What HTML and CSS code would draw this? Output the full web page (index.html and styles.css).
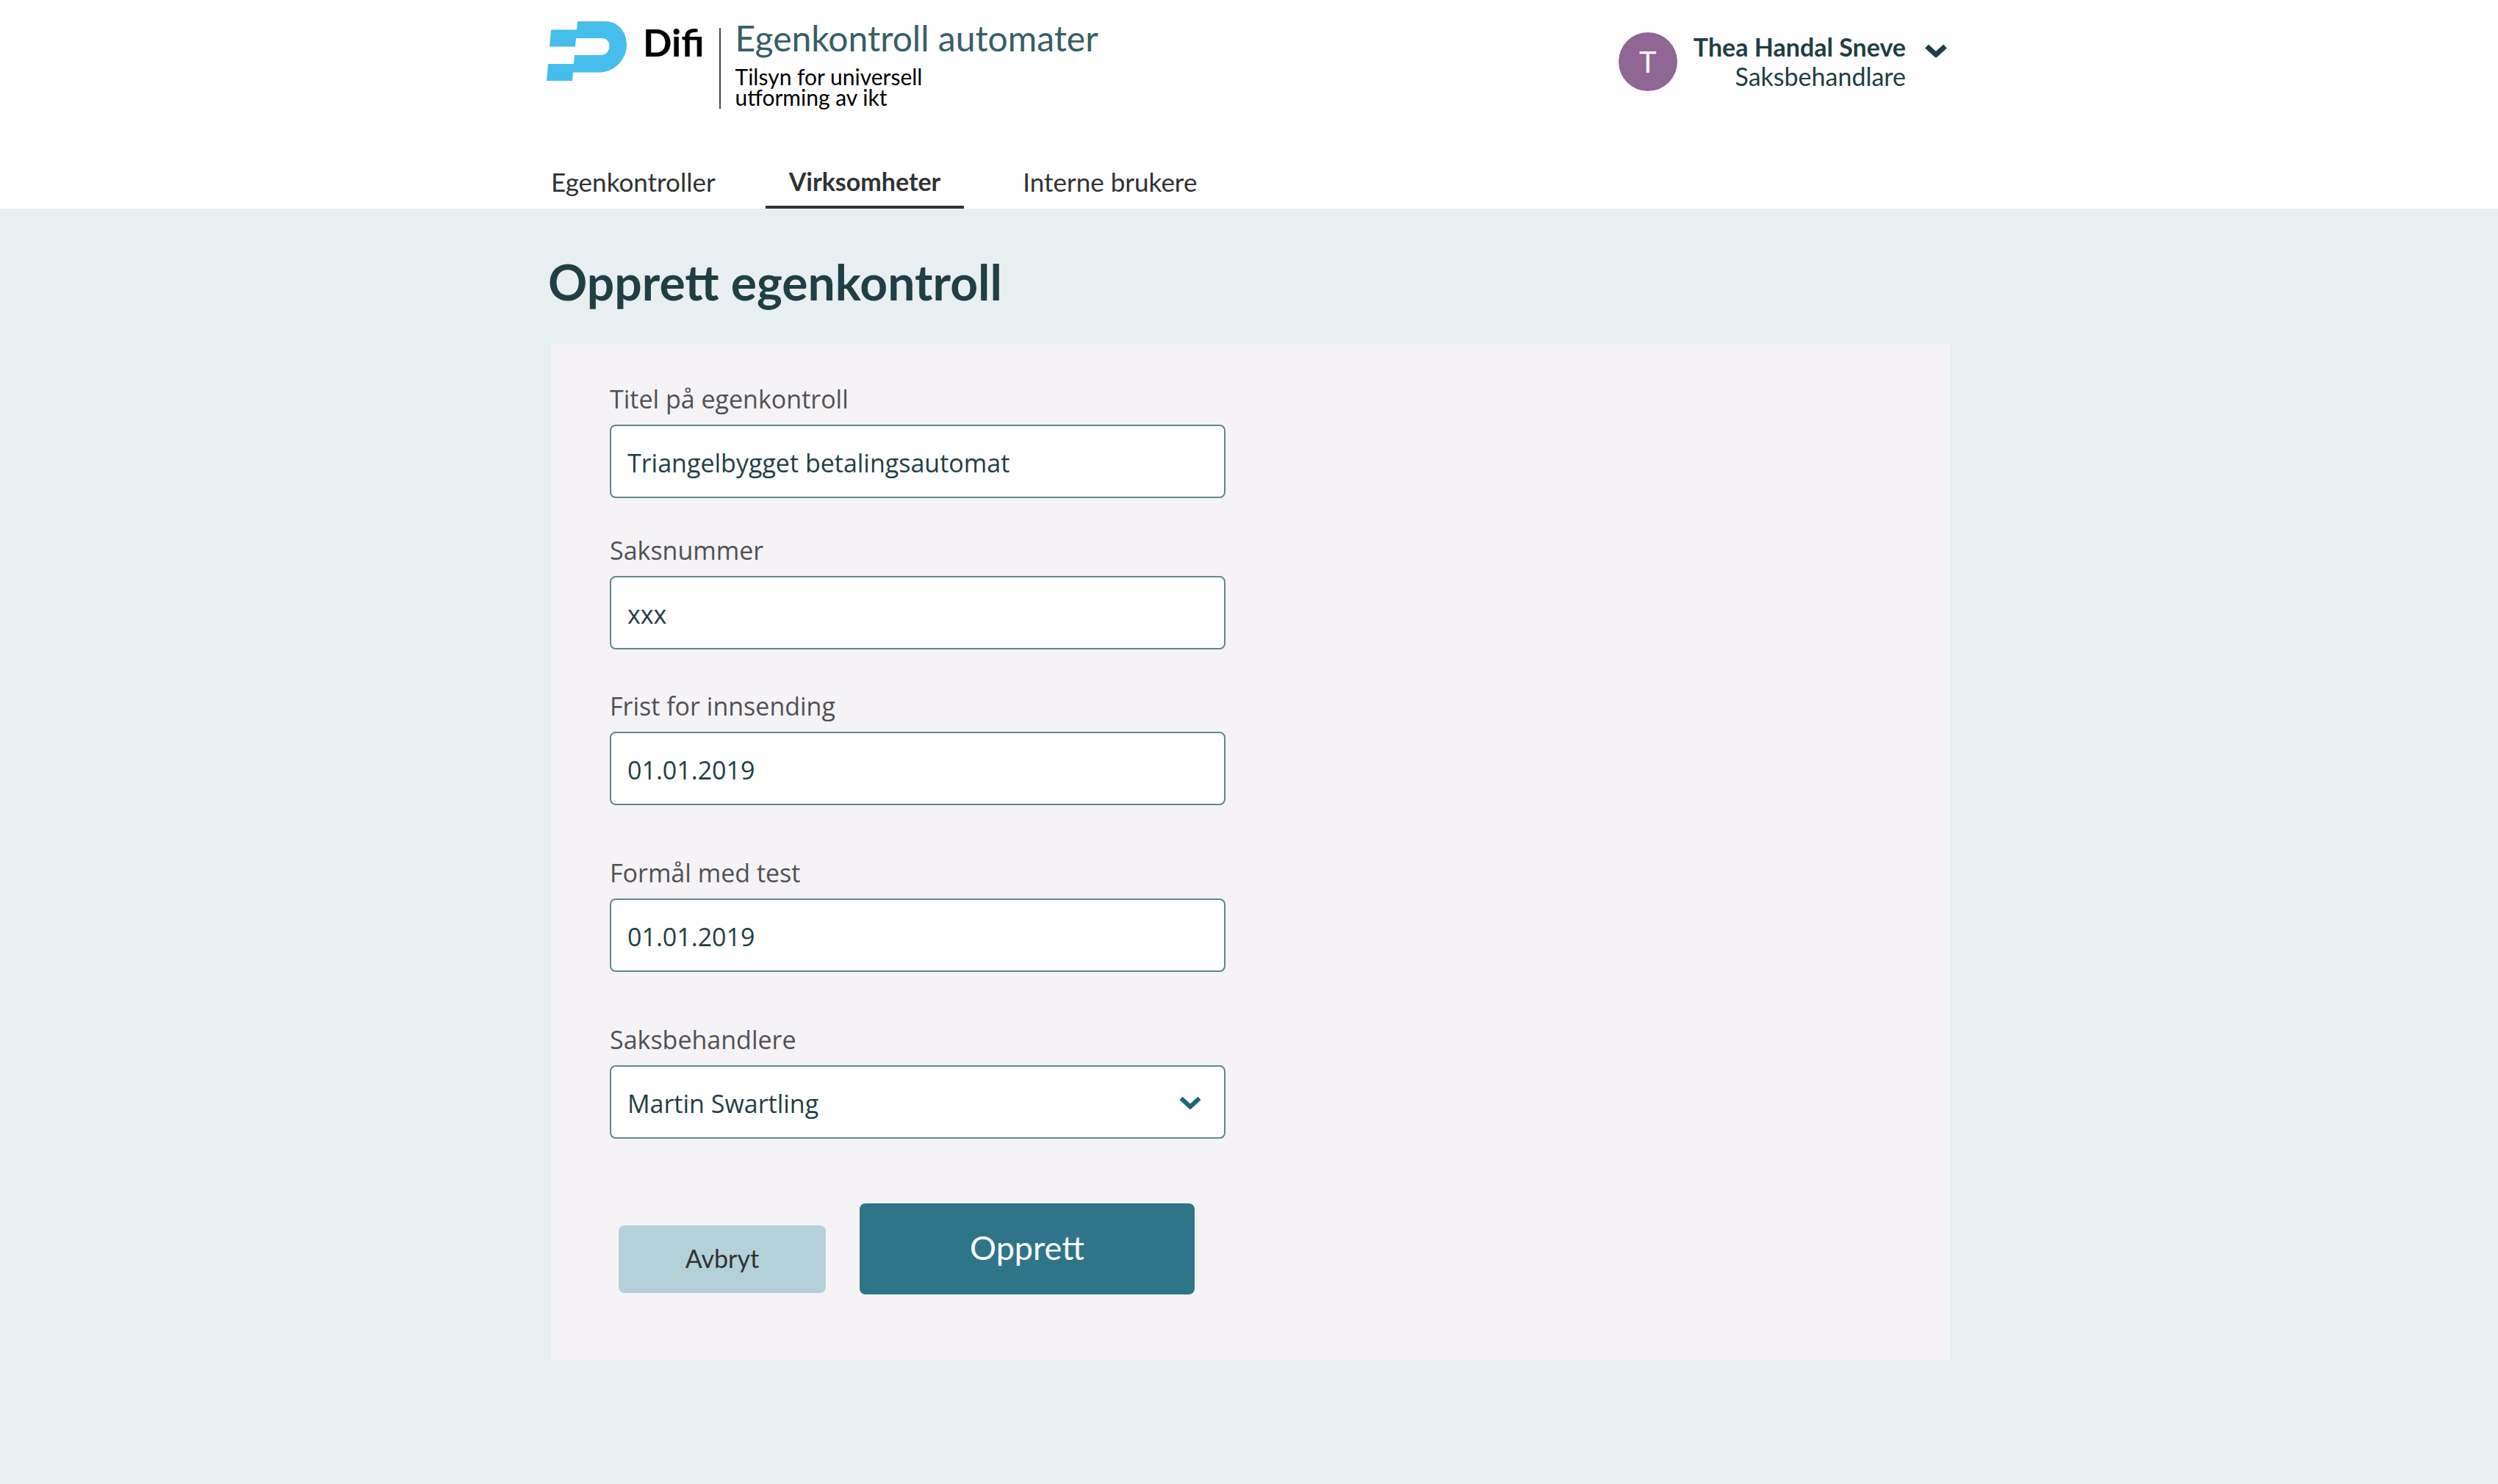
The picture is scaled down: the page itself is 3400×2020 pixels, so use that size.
FILE: index.html
```html
<!DOCTYPE html>
<html lang="nb">
<head>
  <meta charset="utf-8">
  <meta name="viewport" content="width=device-width, initial-scale=1">
  <title>Opprett egenkontroll</title>
  <link rel="stylesheet" href="styles.css">
</head>
<body>
  <header class="header">
    <div class="container">
      <div class="topbar">
        <a class="brand" href="#">
          <svg class="brand-mark" viewBox="0 0 109 81" aria-hidden="true">
            <path d="M42 0H80C97 0 109 14 109 32C109 52 92 69.500 72 69.500H36L35 81H0L2 58H37L38 46H74C81 46 85.500 40 85.500 33.500C85.500 27 81 23 75 23H40L39 34.500H4L6 11.500H41Z"/>
          </svg>
          <span class="brand-name">Difi</span>
          <span class="brand-text">
            <span class="brand-product">Egenkontroll automater</span>
            <span class="brand-tagline">Tilsyn for universell<br>utforming av ikt</span>
          </span>
        </a>
        <button class="user" type="button">
          <span class="avatar">T</span>
          <span class="user-text">
            <span class="user-name">Thea Handal Sneve</span>
            <span class="user-role">Saksbehandlare</span>
          </span>
          <svg class="chevron" viewBox="0 0 30 18" aria-hidden="true"><path d="M2.500 3L15 14.500L27.500 3"/></svg>
        </button>
      </div>
      <nav class="nav">
        <a class="nav-link" href="#">Egenkontroller</a>
        <a class="nav-link nav-link--active" href="#" aria-current="page">Virksomheter</a>
        <a class="nav-link" href="#">Interne brukere</a>
      </nav>
    </div>
  </header>
  <main class="container">
    <h1 class="title">Opprett egenkontroll</h1>
    <form class="card">
      <div class="field">
        <label class="label" for="title">Titel på egenkontroll</label>
        <input class="input" id="title" type="text" value="Triangelbygget betalingsautomat">
      </div>
      <div class="field field--close">
        <label class="label" for="case">Saksnummer</label>
        <input class="input" id="case" type="text" value="xxx">
      </div>
      <div class="field field--medium">
        <label class="label" for="deadline">Frist for innsending</label>
        <input class="input" id="deadline" type="text" value="01.01.2019">
      </div>
      <div class="field field--far">
        <label class="label" for="purpose">Formål med test</label>
        <input class="input" id="purpose" type="text" value="01.01.2019">
      </div>
      <div class="field field--far">
        <label class="label" for="handler">Saksbehandlere</label>
        <div class="select">
          <select class="input" id="handler"><option>Martin Swartling</option></select>
          <svg class="chevron chevron--select" viewBox="0 0 30 18" aria-hidden="true"><path d="M2.500 3L15 14.500L27.500 3"/></svg>
        </div>
      </div>
      <div class="actions">
        <button class="button button--secondary" type="button">Avbryt</button>
        <button class="button button--primary" type="submit">Opprett</button>
      </div>
    </form>
  </main>
</body>
</html>
```
FILE: styles.css
```css
* { box-sizing: border-box; }

body {
  margin: 0;
  background: #e7eff0;
  color: #1f3f43;
  font-family: Lato, "Liberation Sans", sans-serif;
}

a { color: inherit; text-decoration: none; }

.container {
  max-width: 1916px;
  margin: 0 auto;
  padding: 0 4px 0 8px;
}

.header { background: #fff; }

.topbar {
  display: flex;
  justify-content: space-between;
  align-items: flex-start;
}

.brand {
  display: flex;
  align-items: flex-start;
  margin-left: -6px;
  padding-top: 29px;
}

.brand-mark { width: 109px; height: 81px; fill: #46beeb; }

.brand-name {
  margin-left: 22px;
  color: #000;
  font-size: 52px;
  font-weight: 700;
  line-height: 56px;
}

.brand-text {
  display: flex;
  flex-direction: column;
  margin: 9px 0 0 20px;
  padding: 0 0 2px 20px;
  border-left: 2px solid #474747;
}

.brand-product { color: #365f65; font-size: 48px; line-height: 48px; margin-top: -10px; }

.brand-tagline { margin-top: 14px; color: #000; font-size: 30px; line-height: 28px; }

.user {
  display: flex;
  align-items: flex-start;
  margin: 44px 4px 0 0;
  padding: 0;
  border: 0;
  background: none;
  color: inherit;
  font: inherit;
}

.avatar {
  width: 80px;
  height: 80px;
  border-radius: 50%;
  background: #8f6694;
  color: #fff;
  font-size: 40px;
  line-height: 80px;
}

.user-text {
  display: flex;
  flex-direction: column;
  margin-left: 22px;
  font-size: 34px;
  line-height: 40px;
  text-align: right;
}

.user-name { font-weight: 700; }

.chevron {
  width: 30px;
  height: 18px;
  margin: 16px 0 0 26px;
  fill: none;
  stroke: #1f3f43;
  stroke-width: 7;
}

.nav { display: flex; gap: 60px; margin: 74px 0 0 -8px; }

.nav-link {
  padding: 0 8px 8px;
  border-bottom: 4px solid transparent;
  color: #303233;
  font-size: 35px;
  line-height: 50px;
}

.nav-link--active {
  margin-right: 12px;
  padding: 0 32px 8px;
  border-color: #2d3434;
  font-size: 34px;
  font-weight: 700;
}

.title { margin: 60px 0 0 -4px; font-size: 66px; font-weight: 700; line-height: 80px; }

.card {
  margin-top: 44px;
  padding: 51px 80px 90px;
  background: #f5f3f6;
  font-family: "Open Sans", "Noto Sans", sans-serif;
}

.field { display: flex; flex-direction: column; gap: 11px; max-width: 838px; }
.field--close { margin-top: 47px; }
.field--medium { margin-top: 53px; }
.field--far { margin-top: 68px; }

.label { color: #505153; font-size: 34px; line-height: 48px; }

.input {
  width: 100%;
  height: 100px;
  padding: 4px 22px 0;
  border: 2px solid #628789;
  border-radius: 8px;
  background: #fff;
  color: #1f3f43;
  font-family: inherit;
  font-size: 34px;
  appearance: none;
}

.select { position: relative; }

.chevron--select {
  position: absolute;
  top: 42px;
  right: 33px;
  margin: 0;
  stroke: #1b667c;
  stroke-width: 6;
  pointer-events: none;
}

.actions { display: flex; align-items: flex-end; gap: 46px; margin: 88px 0 0 12px; }

.button {
  padding: 0 0 4px;
  border: 0;
  border-radius: 8px;
  font-family: Lato, "Liberation Sans", sans-serif;
}

.button--secondary {
  width: 282px;
  height: 92px;
  margin-bottom: 2px;
  background: #b4d1d9;
  color: #303233;
  font-size: 34px;
}

.button--primary {
  width: 456px;
  height: 124px;
  background: #2e758a;
  color: #fff;
  font-size: 45px;
}
```
